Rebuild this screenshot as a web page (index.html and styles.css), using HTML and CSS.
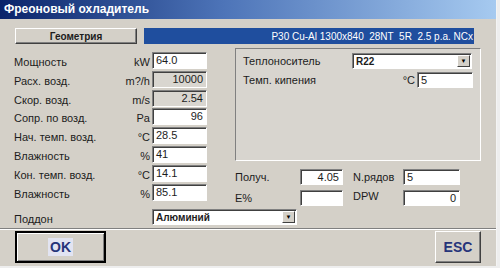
FILE: index.html
```html
<!DOCTYPE html>
<html lang="ru">
<head>
    <meta charset="UTF-8">
    <title>Фреоновый охладитель</title>
    <link rel="stylesheet" href="styles.css">
</head>
<body>
<div class="window">
    <div class="titlebar">Фреоновый охладитель</div>

    <div class="toprow">
        <div class="btn geom">Геометрия</div>
        <div class="infobar"><span>P30 Cu-Al 1300x840  28NT  5R  2.5 p.a. NCx</span></div>
    </div>

    <div class="main">
        <div class="params">
            <span class="lbl">Мощность</span><span class="unit">kW</span><div class="field">64.0</div>
            <span class="lbl">Расх. возд.</span><span class="unit">m?/h</span><div class="field ro num">10000</div>
            <span class="lbl">Скор. возд.</span><span class="unit">m/s</span><div class="field ro num">2.54</div>
            <span class="lbl">Сопр. по возд.</span><span class="unit">Pa</span><div class="field num">96</div>
            <span class="lbl">Нач. темп. возд.</span><span class="unit">°C</span><div class="field">28.5</div>
            <span class="lbl">Влажность</span><span class="unit">%</span><div class="field">41</div>
            <span class="lbl">Кон. темп. возд.</span><span class="unit">°C</span><div class="field">14.1</div>
            <span class="lbl">Влажность</span><span class="unit">%</span><div class="field">85.1</div>
        </div>

        <div class="side">
            <div class="group">
                <div class="grow">
                    <span class="lbl">Теплоноситель</span>
                    <div class="select r22"><span>R22</span><i class="arrow">&#9660;</i></div>
                </div>
                <div class="grow">
                    <span class="lbl">Темп. кипения</span>
                    <span class="unit">°C</span>
                    <div class="field boil">5</div>
                </div>
            </div>

            <div class="results">
                <span class="lbl">Получ.</span><div class="field num">4.05</div>
                <span class="lbl">N.рядов</span><div class="field">5</div>
                <span class="lbl">E%</span><div class="field"></div>
                <span class="lbl dpw">DPW</span><div class="field num">0</div>
            </div>
        </div>
    </div>

    <div class="pallet">
        <span class="lbl">Поддон</span>
        <div class="select tray"><span>Алюминий</span><i class="arrow">&#9660;</i></div>
    </div>

    <div class="separator"></div>

    <div class="footer">
        <div class="btn big default"><span class="focus">OK</span></div>
        <div class="btn big esc">ESC</div>
    </div>
</div>
</body>
</html>
```

FILE: styles.css
```css
body {
    margin: 0;
    padding: 0;
    background-color: #eeeeee;
    font-family: "Liberation Sans", Arial, sans-serif;
    font-size: 11px;
    color: #1c1c1c;
}
.window {
    width: 496px;
    height: 266px;
    background-color: #d4d0c8;
    border-right: 1px solid #f4f4f4;
    display: flex;
    flex-direction: column;
}
.titlebar {
    height: 19px;
    line-height: 19px;
    padding-left: 4px;
    background: linear-gradient(to right, #0a246a, #4d74b8 45%, #a6caf0);
    color: #fff;
    font-weight: bold;
    font-size: 12px;
}
.toprow {
    display: flex;
    gap: 7px;
    padding: 9px 0 0 15px;
}
.btn {
    box-sizing: border-box;
    background-color: #d4d0c8;
    border: 1px solid;
    border-color: #fff #404040 #404040 #fff;
    box-shadow: inset -1px -1px #808080;
    display: flex;
    align-items: center;
    justify-content: center;
    font-weight: bold;
}
.geom {
    width: 122px;
    height: 16px;
    font-size: 10px;
}
.infobar {
    width: 330px;
    height: 16px;
    background-color: #1f4e9e;
    color: #fff;
    font-size: 10px;
    display: flex;
    justify-content: flex-end;
    align-items: center;
    overflow: hidden;
    white-space: pre;
}
.infobar span {
    margin-right: 1px;
}
.main {
    display: flex;
    padding-top: 4px;
}
.params {
    margin: 4px 0 0 14px;
    display: grid;
    grid-template-columns: 100px 38px 55px;
    grid-auto-rows: 17px;
    row-gap: 1.8px;
    align-items: center;
}
.params .lbl, .params .unit {
    padding-top: 3px;
}
.unit {
    text-align: right;
    padding-right: 2px;
}
.field {
    box-sizing: border-box;
    height: 17px;
    background-color: #fff;
    border: 1px solid;
    border-color: #808080 #fff #fff #808080;
    box-shadow: inset 1px 1px #404040;
    padding: 0 3px 0 3px;
    line-height: 15px;
    white-space: nowrap;
}
.field.num {
    text-align: right;
}
.field.ro {
    background-color: #d9d6d0;
}
.side {
    margin-left: 28px;
    width: 246px;
}
.group {
    box-sizing: border-box;
    height: 113px;
    background-color: #d8d5cf;
    border: 1px solid;
    border-color: #808080 #fff #fff #808080;
    padding: 4px 8px 0 7px;
    display: flex;
    flex-direction: column;
    gap: 3px;
}
.grow {
    display: flex;
    align-items: center;
}
.grow .lbl {
    flex: 1;
}
.grow .field {
    height: 16px;
}
.boil {
    width: 56px;
    margin-right: -1px;
}
.select {
    box-sizing: border-box;
    height: 16px;
    background-color: #fff;
    border: 1px solid;
    border-color: #808080 #fff #fff #808080;
    box-shadow: inset 1px 1px #404040;
    display: flex;
    align-items: center;
    justify-content: space-between;
    padding: 1px 1px 1px 3px;
    font-weight: bold;
    font-size: 10px;
}
.r22 {
    width: 120px;
}
.arrow {
    box-sizing: border-box;
    width: 13px;
    height: 12px;
    background-color: #d4d0c8;
    border: 1px solid;
    border-color: #fff #404040 #404040 #fff;
    font-style: normal;
    font-size: 6px;
    line-height: 10px;
    text-align: center;
    color: #000;
}
.results {
    margin-top: 8px;
    display: grid;
    grid-template-columns: 65px 43px 60px 57px;
    grid-template-rows: 16px 16px;
    row-gap: 5px;
    align-items: center;
}
.results .field {
    height: 16px;
}
.results .lbl:nth-of-type(2), .results .dpw {
    padding-left: 10px;
}
.dpw {
    align-self: start;
}
.pallet {
    margin-top: 3px;
    padding-left: 14px;
    display: flex;
    align-items: center;
}
.pallet .lbl {
    width: 138px;
    padding-top: 3px;
}
.tray {
    width: 145px;
}
.separator {
    margin-top: 3px;
    border-top: 1px solid #808080;
    border-bottom: 1px solid #fff;
}
.footer {
    display: flex;
    justify-content: space-between;
    padding: 1px 15px 0 15px;
}
.big {
    height: 32px;
    font-size: 14px;
    color: #26347a;
}
.default {
    width: 91px;
    border-width: 2px;
    border-color: #000;
    box-shadow: inset 1px 1px #fff, inset -1px -1px #808080;
}
.focus {
    background-color: #e2e4f2;
    padding: 1px 2px;
}
.esc {
    width: 46px;
}
```
